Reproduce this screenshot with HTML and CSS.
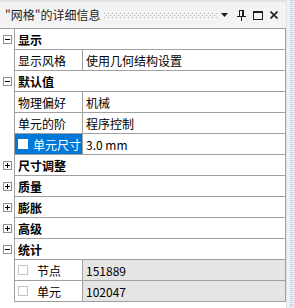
FILE: index.html
```html
<!DOCTYPE html>
<html lang="zh-CN">
<head>
<meta charset="utf-8">
<title>网格的详细信息</title>
<link rel="stylesheet" href="styles.css">
</head>
<body>
<div class="window">
  <div class="panel">
    <div class="titlebar">
      <span class="title">&quot;网格&quot;的详细信息</span>
      <span class="grip"></span>
      <span class="tbtns">
        <svg class="ic-drop" width="7" height="4" viewBox="0 0 7 4"><path d="M0 0H7L3.5 4Z" fill="#1e1e1e"/></svg>
        <svg class="ic-pin" width="9" height="11" viewBox="0 0 9 11" fill="#1e1e1e"><rect x="2" y="0" width="5" height="1"/><rect x="2" y="0" width="1" height="6"/><rect x="5" y="0" width="2" height="6"/><rect x="0" y="6" width="9" height="1"/><rect x="4" y="7" width="1" height="4"/></svg>
        <svg class="ic-max" width="10" height="9" viewBox="0 0 10 9" fill="none" stroke="#1e1e1e"><rect x="0.5" y="0.5" width="9" height="8"/><path d="M0 1.5H10"/></svg>
        <svg class="ic-close" width="8" height="8" viewBox="0 0 8 8" stroke="#1e1e1e" stroke-width="1.6"><path d="M0.5 0.5L7.5 7.5M7.5 0.5L0.5 7.5"/></svg>
      </span>
    </div>
    <div class="grid">
      <div class="row">
        <div class="mg"><svg class="exp" width="9" height="9" viewBox="0 0 9 9"><rect x=".5" y=".5" width="8" height="8" fill="#fff" stroke="#8f8f8f"/><path d="M2 4.5H7" stroke="#000"/></svg></div>
        <div class="body cat">显示</div>
      </div>
      <div class="row">
        <div class="mg"></div>
        <div class="body"><div class="name">显示风格</div><div class="value">使用几何结构设置</div></div>
      </div>
      <div class="row">
        <div class="mg"><svg class="exp" width="9" height="9" viewBox="0 0 9 9"><rect x=".5" y=".5" width="8" height="8" fill="#fff" stroke="#8f8f8f"/><path d="M2 4.5H7" stroke="#000"/></svg></div>
        <div class="body cat">默认值</div>
      </div>
      <div class="row">
        <div class="mg"></div>
        <div class="body"><div class="name">物理偏好</div><div class="value">机械</div></div>
      </div>
      <div class="row">
        <div class="mg"></div>
        <div class="body"><div class="name">单元的阶</div><div class="value">程序控制</div></div>
      </div>
      <div class="row">
        <div class="mg"></div>
        <div class="body"><div class="name sel"><span class="chk"></span><span class="nm">单元尺寸</span></div><div class="value">3.0 mm</div></div>
      </div>
      <div class="row">
        <div class="mg"><svg class="exp" width="9" height="9" viewBox="0 0 9 9"><rect x=".5" y=".5" width="8" height="8" fill="#fff" stroke="#8f8f8f"/><path d="M2 4.5H7M4.5 2V7" stroke="#000"/></svg></div>
        <div class="body cat">尺寸调整</div>
      </div>
      <div class="row">
        <div class="mg"><svg class="exp" width="9" height="9" viewBox="0 0 9 9"><rect x=".5" y=".5" width="8" height="8" fill="#fff" stroke="#8f8f8f"/><path d="M2 4.5H7M4.5 2V7" stroke="#000"/></svg></div>
        <div class="body cat">质量</div>
      </div>
      <div class="row">
        <div class="mg"><svg class="exp" width="9" height="9" viewBox="0 0 9 9"><rect x=".5" y=".5" width="8" height="8" fill="#fff" stroke="#8f8f8f"/><path d="M2 4.5H7M4.5 2V7" stroke="#000"/></svg></div>
        <div class="body cat">膨胀</div>
      </div>
      <div class="row">
        <div class="mg"><svg class="exp" width="9" height="9" viewBox="0 0 9 9"><rect x=".5" y=".5" width="8" height="8" fill="#fff" stroke="#8f8f8f"/><path d="M2 4.5H7M4.5 2V7" stroke="#000"/></svg></div>
        <div class="body cat">高级</div>
      </div>
      <div class="row">
        <div class="mg"><svg class="exp" width="9" height="9" viewBox="0 0 9 9"><rect x=".5" y=".5" width="8" height="8" fill="#fff" stroke="#8f8f8f"/><path d="M2 4.5H7" stroke="#000"/></svg></div>
        <div class="body cat">统计</div>
      </div>
      <div class="row">
        <div class="mg"></div>
        <div class="body"><div class="name"><span class="chk"></span><span class="nm">节点</span></div><div class="value ro">151889</div></div>
      </div>
      <div class="row">
        <div class="mg"></div>
        <div class="body"><div class="name"><span class="chk"></span><span class="nm">单元</span></div><div class="value ro">102047</div></div>
      </div>
    </div>
  </div>
  <div class="strip"><div class="dots"></div></div>
</div>
</body>
</html>
```
FILE: styles.css
```css
* { box-sizing: border-box; }
html, body { margin: 0; padding: 0; }
body {
  width: 294px;
  height: 308px;
  overflow: hidden;
  background: #fff;
  font-family: "Noto Sans CJK SC", "Microsoft YaHei", sans-serif;
  font-size: 12px;
  color: #000;
}
.window { display: flex; height: 308px; }
.panel {
  width: 286px;
  flex: none;
  display: flex;
  flex-direction: column;
}
.titlebar {
  height: 28px;
  display: flex;
  align-items: center;
  background: #f3f3f3;
  border-top: 2px solid #e2e2e2;
  padding-left: 5px;
  padding-right: 8px;
}
.title {
  color: #1e1e1e;
  white-space: nowrap;
  line-height: 16px;
}
.grip {
  flex: 1;
  height: 5px;
  margin: 0 4px 0 4px;
  background-image:
    linear-gradient(90deg, #b4b4b4 1px, transparent 1px),
    linear-gradient(90deg, #b4b4b4 1px, transparent 1px),
    linear-gradient(90deg, #b4b4b4 1px, transparent 1px);
  background-size: 4px 1px;
  background-repeat: repeat-x;
  background-position: 0 0, 2px 2px, 0 4px;
}
.tbtns { display: flex; align-items: center; }
.tbtns svg { display: block; }
.ic-drop { margin-left: 0; }
.ic-pin { margin-left: 9px; }
.ic-max { margin-left: 7px; }
.ic-close { margin-left: 7px; }

.grid {
  border-top: 1px solid #a0a0a0;
  display: flex;
  flex-direction: column;
}
.row { display: flex; height: 21px; }
.mg {
  width: 14px;
  flex: none;
  display: flex;
  align-items: center;
  padding-left: 3px;
  padding-bottom: 1px;
}
.exp { display: block; }
.body {
  flex: 1;
  display: flex;
  align-items: stretch;
  border-left: 1px solid #a0a0a0;
  border-right: 1px solid #a0a0a0;
  border-bottom: 1px solid #a0a0a0;
}
.cat {
  font-weight: bold;
  padding-left: 3px;
  align-items: center;
}
.name {
  width: 68px;
  flex: none;
  border-right: 1px solid #a0a0a0;
  padding-left: 3px;
  display: flex;
  align-items: center;
  white-space: nowrap;
  overflow: hidden;
}
.name.sel { background: #0078d7; color: #fff; }
.chk {
  width: 10px;
  height: 10px;
  flex: none;
  border: 1px solid #c4c4c4;
  background: #fff;
  margin-right: 9px;
}
.sel .chk { border-color: #fff; margin-right: 5px; }
.value {
  flex: 1;
  padding-left: 3px;
  display: flex;
  align-items: center;
  white-space: nowrap;
}
.value.ro { background: #e6e5e3; }
.strip {
  flex: 1;
  background: #eef0f3;
  border-left: 1px solid #dfe3e8;
  padding-left: 3px;
}
.dots {
  width: 3px;
  height: 100%;
  background-image: linear-gradient(#bcd6ee 1px, transparent 1px);
  background-size: 3px 2px;
}
```
